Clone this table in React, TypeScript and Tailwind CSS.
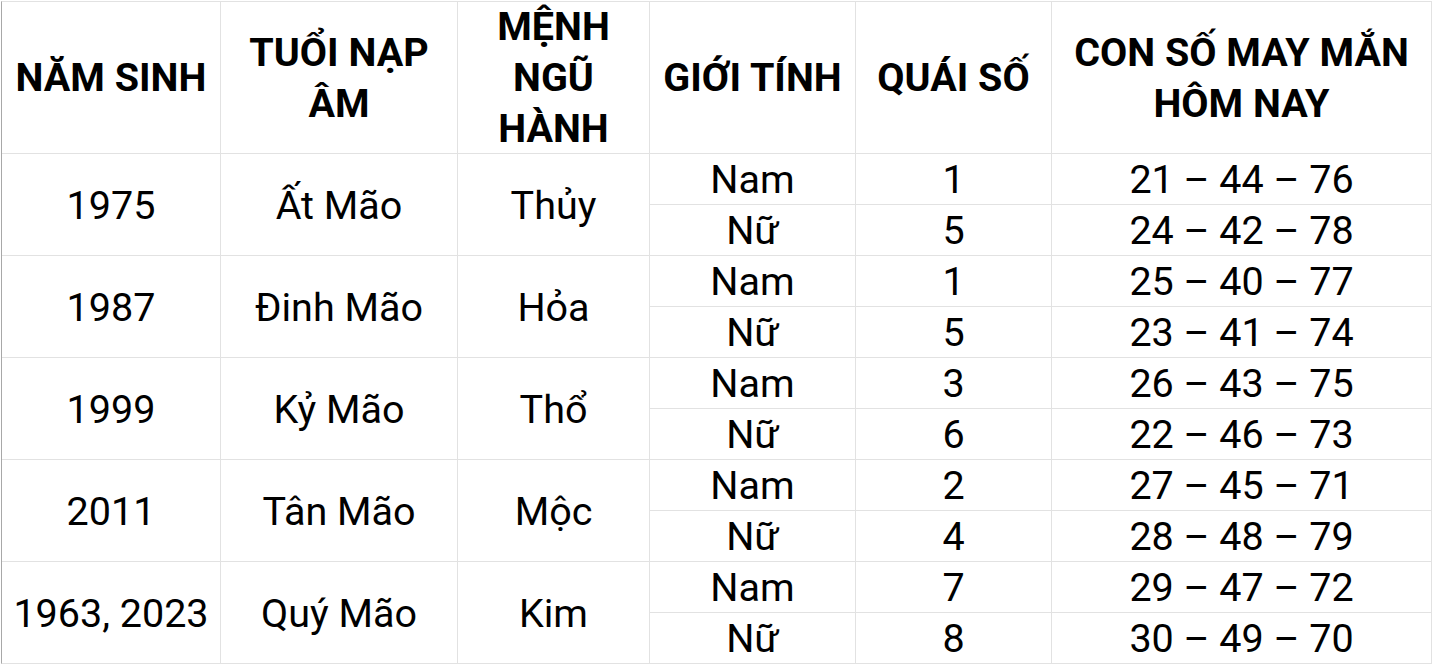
const headers = ['NĂM SINH', 'TUỔI NẠP ÂM', 'MỆNH NGŨ HÀNH', 'GIỚI TÍNH', 'QUÁI SỐ', 'CON SỐ MAY MẮN HÔM NAY'];

const groups = [
  { year: '1975', tuoi: 'Ất Mão', menh: 'Thủy', rows: [['Nam', '1', '21 – 44 – 76'], ['Nữ', '5', '24 – 42 – 78']] },
  { year: '1987', tuoi: 'Đinh Mão', menh: 'Hỏa', rows: [['Nam', '1', '25 – 40 – 77'], ['Nữ', '5', '23 – 41 – 74']] },
  { year: '1999', tuoi: 'Kỷ Mão', menh: 'Thổ', rows: [['Nam', '3', '26 – 43 – 75'], ['Nữ', '6', '22 – 46 – 73']] },
  { year: '2011', tuoi: 'Tân Mão', menh: 'Mộc', rows: [['Nam', '2', '27 – 45 – 71'], ['Nữ', '4', '28 – 48 – 79']] },
  { year: '1963, 2023', tuoi: 'Quý Mão', menh: 'Kim', rows: [['Nam', '7', '29 – 47 – 72'], ['Nữ', '8', '30 – 49 – 70']] },
];

export default function App() {
  return (
    <div className="min-h-screen bg-white p-px text-black" style={{ fontFamily: 'Roboto, "Noto Sans", sans-serif' }}>
      <div className="inline-grid grid-cols-[218px_236px_191px_205px_195px_379px] grid-rows-[151px_repeat(10,50px)] gap-px bg-[#e2e2e2] border border-[#e2e2e2] border-l-[#a8a8a8]">
        {headers.map((h) => (
          <div key={h} className="bg-white flex items-center justify-center text-center font-bold text-[39.5px] leading-[51px] px-1">
            {h}
          </div>
        ))}
        {groups.map((g) => (
          <>
            <div key={g.year + 'y'} className="row-span-2 bg-white flex items-center justify-center text-[39.5px] pt-0.5">{g.year}</div>
            <div key={g.year + 't'} className="row-span-2 bg-white flex items-center justify-center text-[39.5px] pt-0.5">{g.tuoi}</div>
            <div key={g.year + 'm'} className="row-span-2 bg-white flex items-center justify-center text-[39.5px] pt-0.5">{g.menh}</div>
            {g.rows.map((r, i) => (
              <>
                <div key={g.year + i + 'a'} className="col-start-4 bg-white flex items-center justify-center text-[39.5px] leading-none pt-0.5">{r[0]}</div>
                <div key={g.year + i + 'b'} className="bg-white flex items-center justify-center text-[39.5px] leading-none pt-0.5">{r[1]}</div>
                <div key={g.year + i + 'c'} className="bg-white flex items-center justify-center text-[39.5px] leading-none pt-0.5">{r[2]}</div>
              </>
            ))}
          </>
        ))}
      </div>
    </div>
  );
}
